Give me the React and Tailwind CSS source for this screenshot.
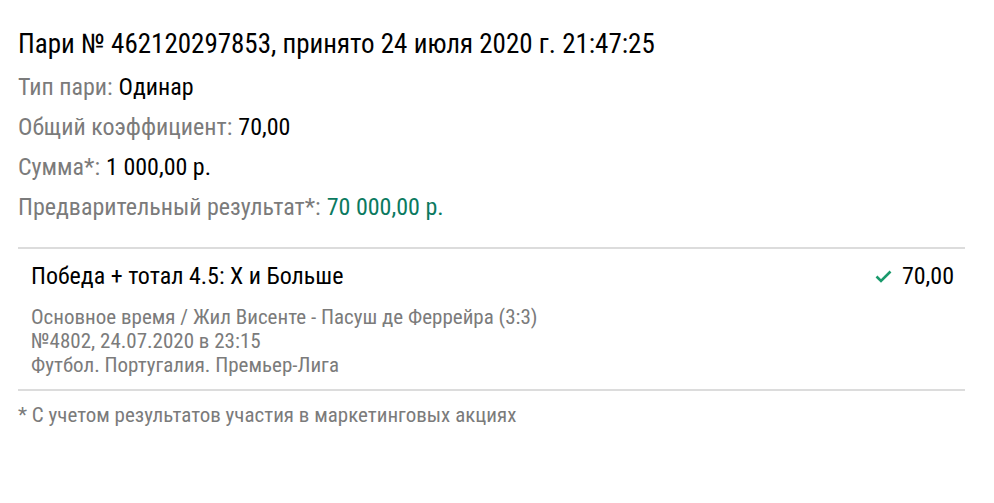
import React from "react"

const Row = ({ label, value, valueClass = "text-black" }) => (
    <div className="h-[40px] flex items-center text-[24px]">
        <span className="text-[#7b7b7b]">{label}</span>
        <span className={"ml-[6px] " + valueClass}>{value}</span>
    </div>
)

const App = () => {
    return (
        <div className="w-[994px] h-[503px] bg-white pl-[18px] pr-[29px] pt-[27px]" style={{ fontFamily: "'Roboto Condensed', Roboto, 'Liberation Sans', sans-serif" }}>
            <h1 className="text-[27px] leading-[34px] text-black">
                Пари № 462120297853, принято 24 июля 2020 г. 21:47:25
            </h1>
            <div className="mt-[6px]">
                <Row label="Тип пари:" value="Одинар" />
                <Row label="Общий коэффициент:" value="70,00" />
                <Row label="Сумма*:" value="1 000,00 р." />
                <Row label="Предварительный результат*:" value="70 000,00 р." valueClass="text-[#0b7a5f]" />
            </div>

            <div className="mt-[20px] border-t-2 border-[#dcdcdc]">
                <div className="pl-[13px] pr-[11px] pt-[13px] pb-[12px]">
                    <div className="flex items-center justify-between text-[24px] leading-[28px] text-black">
                        <span>Победа + тотал 4.5: Х и Больше</span>
                        <span className="flex items-center gap-[10px]">
                            <svg width="17" height="13" viewBox="0 0 17 13" fill="none">
                                <path d="M1.5 6.5 L6 11 L15.5 1.5" stroke="#1a9a6c" strokeWidth="2.6" />
                            </svg>
                            70,00
                        </span>
                    </div>
                    <div className="mt-[15px] text-[21px] leading-[24px] text-[#7b7b7b]">
                        <div>Основное время / Жил Висенте - Пасуш де Феррейра (3:3)</div>
                        <div>№4802, 24.07.2020 в 23:15</div>
                        <div>Футбол. Португалия. Премьер-Лига</div>
                    </div>
                </div>
            </div>

            <div className="border-t-2 border-[#dcdcdc] pt-[12px] text-[21px] leading-[24px] text-[#7b7b7b]">
                * С учетом результатов участия в маркетинговых акциях
            </div>
        </div>
    )
}

export default App
